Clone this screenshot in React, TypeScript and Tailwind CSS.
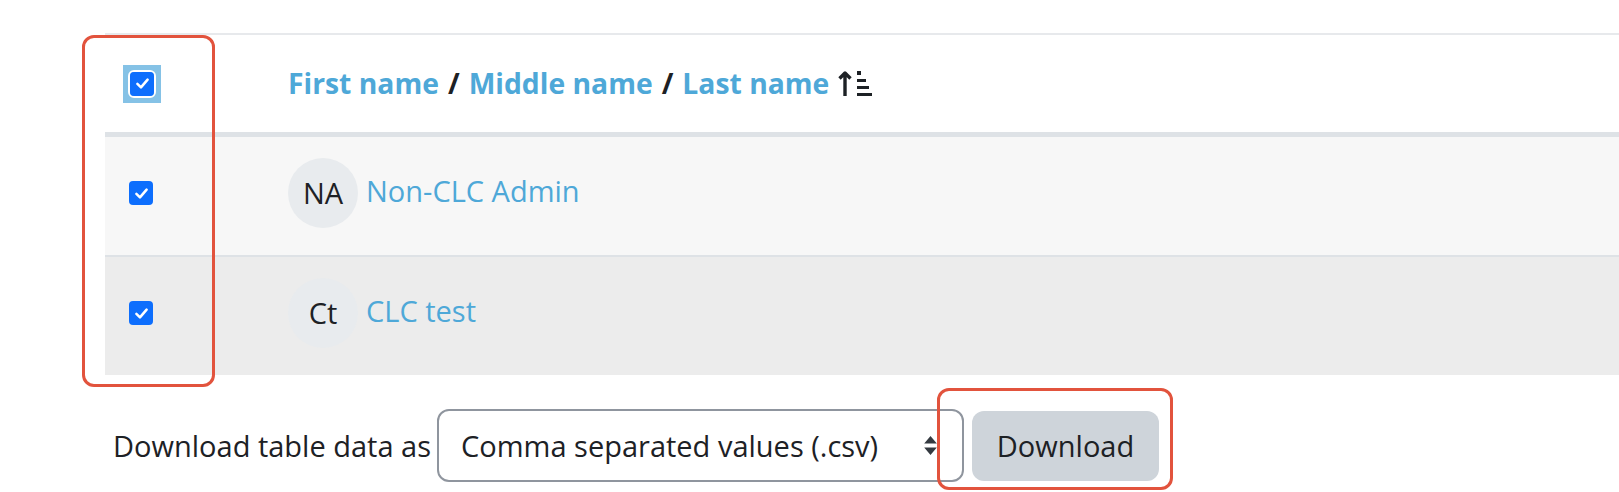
import React from "react";

const CheckBox = () => (
  <span className="flex h-[24px] w-[24px] items-center justify-center rounded-[4px] bg-[#0d6efd]">
    <svg viewBox="0 0 20 20" className="h-[17px] w-[17px]">
      <path
        d="M4 10.5 L8.2 14.5 L16 5.5"
        fill="none"
        stroke="white"
        strokeWidth="3"
        strokeLinecap="round"
        strokeLinejoin="round"
      />
    </svg>
  </span>
);

const SortIcon = () => (
  <svg viewBox="0 0 36 28" className="ml-[9px] h-[28px] w-[36px]">
    <path
      d="M7 26 V3 M1.5 8.5 L7 3 L12.5 8.5"
      fill="none"
      stroke="#1d2125"
      strokeWidth="3.4"
      strokeLinejoin="round"
    />
    <rect x="19" y="1" width="4" height="4" fill="#1d2125" />
    <rect x="19" y="9" width="9" height="3" fill="#1d2125" />
    <rect x="19" y="16" width="12" height="3" fill="#1d2125" />
    <rect x="19" y="23" width="15" height="3" fill="#1d2125" />
  </svg>
);

type Row = { initials: string; name: string; bg: string };

const rows: Row[] = [
  { initials: "NA", name: "Non-CLC Admin", bg: "bg-[#f7f7f7] border-b-2 border-[#dee2e6] h-[120px]" },
  { initials: "Ct", name: "CLC test", bg: "bg-[#ececec] h-[118px]" },
];

export default function App() {
  return (
    <div className="relative h-[492px] w-[1619px] overflow-hidden bg-white font-['Open_Sans',sans-serif] text-[29px] text-[#1d2125]">
      <div className="pl-[105px] pt-[33px]">
        {/* table */}
        <div className="border-t-2 border-[#e7e9ec]">
          <div className="flex h-[102px] items-center border-b-[5px] border-[#dee2e6]">
            <div className="w-[183px] pl-[18px]">
              <span className="flex h-[38px] w-[38px] items-center justify-center bg-[#85c2e6]">
                <span className="rounded-[6px] border-2 border-white">
                  <CheckBox />
                </span>
              </span>
            </div>
            <div className="flex items-center text-[28.3px] font-bold">
              <span className="text-[#4ea8d8]">First name</span>
              <span className="mx-[9px]">/</span>
              <span className="text-[#4ea8d8]">Middle name</span>
              <span className="mx-[9px]">/</span>
              <span className="text-[#4ea8d8]">Last name</span>
              <SortIcon />
            </div>
          </div>
          {rows.map((r) => (
            <div key={r.name} className={`flex items-center pb-[6px] ${r.bg}`}>
              <div className="w-[183px] pl-[24px]">
                <CheckBox />
              </div>
              <div className="flex items-center">
                <span className="flex h-[70px] w-[70px] items-center justify-center rounded-full bg-[#e8ebee]">
                  {r.initials}
                </span>
                <span className="ml-[8px] -mt-[4px] text-[#4ea8d8]">{r.name}</span>
              </div>
            </div>
          ))}
        </div>
      </div>

      {/* download */}
      <div className="mt-[34px] flex items-center pl-[113px]">
        <span className="mr-[6px]">Download table data as</span>
        <div className="flex h-[73px] w-[527px] items-center justify-between rounded-[12px] border-2 border-[#8f959e] pl-[22px] pr-[24px]">
          <span>Comma separated values (.csv)</span>
          <svg viewBox="0 0 14 20" className="h-[21px] w-[15px]">
            <path d="M7 1 L13 8 H1 Z M1 12 H13 L7 19 Z" fill="#343a40" />
          </svg>
        </div>
        <button className="ml-[8px] flex h-[70px] w-[187px] items-center justify-center rounded-[12px] bg-[#ced4da]">
          Download
        </button>
      </div>

      {/* annotation boxes */}
      <div className="absolute left-[82px] top-[35px] h-[352px] w-[133px] rounded-[12px] border-[3px] border-[#e2533d]" />
      <div className="absolute left-[937px] top-[388px] h-[102px] w-[236px] rounded-[12px] border-[3px] border-[#e2533d]" />
    </div>
  );
}
